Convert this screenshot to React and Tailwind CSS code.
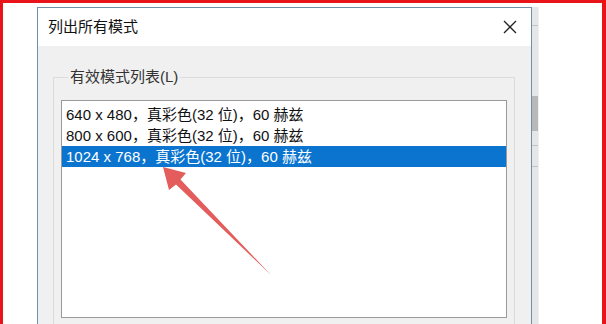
import React from 'react';

const modes = [
  '640 x 480，真彩色(32 位)，60 赫兹',
  '800 x 600，真彩色(32 位)，60 赫兹',
  '1024 x 768，真彩色(32 位)，60 赫兹',
];

const font = { fontFamily: '"Liberation Sans", "Noto Sans CJK SC", sans-serif' };

const App = () => {
  const selected = 2;

  return (
    <div
      className="w-[606px] h-[324px] overflow-hidden bg-white border-t-[3px] border-l-[3px] border-r-[4px] border-[#e8141a]"
      style={font}
    >
      <div className="flex pl-[34px] pt-[4px]">
        {/* Dialog */}
        <div className="w-[495px] h-[330px] shrink-0 border border-[#6f90a8] bg-[#f0f0f0]">
          {/* Title bar */}
          <div className="h-[38px] bg-white flex items-center justify-between pl-[10px] pr-[12px]">
            <span className="text-[15px] text-[#111]">列出所有模式</span>
            <svg width="14" height="14" viewBox="0 0 14 14" className="mr-[2px]">
              <path d="M1 1 L13 13 M13 1 L1 13" stroke="#222" strokeWidth="1.3" />
            </svg>
          </div>

          {/* Body */}
          <div className="pl-[15px] pr-[16px] pt-[21px]">
            <fieldset className="border border-[#dcdcdc] px-[7px] pb-[10px]">
              <legend className="ml-[7px] px-[2px] text-[15px] leading-[20px] text-[#333]">
                有效模式列表(L)
              </legend>

              {/* Listbox */}
              <div className="relative mt-[13px] h-[218px] border border-[#9a9a9a] bg-white pt-[3px]">
                {modes.map((m, i) => (
                  <div
                    key={m}
                    className={
                      i === selected
                        ? 'h-[21px] leading-[21px] pl-[4px] text-[15px] whitespace-nowrap bg-[#0a74cf] text-white'
                        : 'h-[21px] leading-[21px] pl-[4px] text-[15px] whitespace-nowrap text-[#111]'
                    }
                  >
                    {m}
                  </div>
                ))}

                {/* annotation arrow */}
                <svg
                  className="absolute left-0 top-0 pointer-events-none"
                  width="445"
                  height="216"
                  viewBox="61 100 445 216"
                >
                  <polygon
                    points="162,166 185,172 179.5,178.5 270,274 175,183.5 168,189"
                    fill="#e04f4d"
                    fillOpacity="0.92"
                  />
                </svg>
              </div>
            </fieldset>
          </div>
        </div>

        {/* bits of the window behind */}
        <div className="w-[6px] h-[330px] shrink-0 bg-[#e4e6e8] flex flex-col">
          <div className="h-[18px]" />
          <div className="h-px bg-[#c4c4c4]" />
          <div className="h-[70px]" />
          <div className="h-[35px] bg-[#b8b8b8]" />
          <div className="h-[14px]" />
          <div className="h-px bg-[#c4c4c4]" />
          <div className="h-[20px]" />
          <div className="h-px bg-[#c4c4c4]" />
        </div>
        <div className="w-px h-[330px] bg-[#eef0f2]" />
      </div>
    </div>
  );
};

export default App;
